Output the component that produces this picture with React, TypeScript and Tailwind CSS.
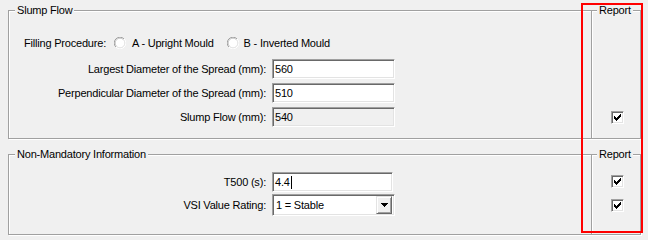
import type { ReactNode } from 'react';

const sunken =
  'border border-t-[#a0a0a0] border-l-[#a0a0a0] border-b-white border-r-white shadow-[inset_1px_1px_0_#696969,inset_-1px_-1px_0_#e3e3e3]';

function Radio() {
  return (
    <svg width="12" height="12" viewBox="0 0 12 12" className="shrink-0">
      <circle cx="6" cy="6" r="5" fill="#fff" />
      <path d="M1.9 10.1 A5.5 5.5 0 0 1 10.1 1.9" fill="none" stroke="#a0a0a0" strokeWidth="1" />
      <path d="M2.6 9.4 A4.5 4.5 0 0 1 9.4 2.6" fill="none" stroke="#c8c8c8" strokeWidth="1" />
      <path d="M10.1 1.9 A5.5 5.5 0 0 1 1.9 10.1" fill="none" stroke="#fff" strokeWidth="1" />
      <path d="M9.4 2.6 A4.5 4.5 0 0 1 2.6 9.4" fill="none" stroke="#e3e3e3" strokeWidth="1" />
    </svg>
  );
}

function CheckBox() {
  return (
    <div className={`h-[13px] w-[13px] bg-white ${sunken}`}>
      <svg width="11" height="11" viewBox="0 0 11 11" shapeRendering="crispEdges">
        <polygon points="2,4 4,6 9,1 9,4 4,9 2,7" fill="#000" />
      </svg>
    </div>
  );
}

function Legend({ children, className }: { children: ReactNode; className: string }) {
  return <span className={`absolute -top-[7px] bg-[#f0f0f0] px-[2px] leading-[13px] ${className}`}>{children}</span>;
}

function Row({ label, children, className = '' }: { label: string; children: ReactNode; className?: string }) {
  return (
    <div className={`flex items-center ${className}`}>
      <span className="w-[242px] text-right">{label}</span>
      <div className="ml-[6px]">{children}</div>
    </div>
  );
}

function TextBox({ value, disabled, caret, width = 'w-[123px]' }: { value: string; disabled?: boolean; caret?: boolean; width?: string }) {
  return (
    <div className={`flex h-[20px] ${width} items-center px-[2px] ${disabled ? 'bg-[#f0f0f0]' : 'bg-white'} ${sunken}`}>
      <span>{value}</span>
      {caret && <span className="ml-[1px] inline-block h-[13px] w-px bg-black" />}
    </div>
  );
}

export default function App() {
  return (
    <div className="relative h-[240px] w-[648px] bg-[#f0f0f0] pl-[8px] pt-[10px] font-['Liberation_Sans',Arial,sans-serif] text-[11px] leading-[13px] tracking-[-0.2px] text-black">
      {/* Slump Flow */}
      <div className="relative flex h-[129px] w-[633px] border border-[#a0a0a0] shadow-[inset_1px_1px_0_#fff,1px_1px_0_#fff]">
        <Legend className="left-[6px]">Slump Flow</Legend>
        <div className="flex-1 pl-[15px] pt-[22px]">
          <div className="flex h-[20px] items-center">
            <span>Filling Procedure:</span>
            <span className="ml-[8px]"><Radio /></span>
            <span className="ml-[6px]">A - Upright Mould</span>
            <span className="ml-[13px]"><Radio /></span>
            <span className="ml-[5px]">B - Inverted Mould</span>
          </div>
          <Row label="Largest Diameter of the Spread (mm):" className="mt-[6px]">
            <TextBox value="560" />
          </Row>
          <Row label="Perpendicular Diameter of the Spread (mm):" className="mt-[4px]">
            <TextBox value="510" />
          </Row>
          <Row label="Slump Flow (mm):" className="mt-[4px]">
            <TextBox value="540" disabled />
          </Row>
        </div>
        <div className="relative w-[49px] border-l border-[#a0a0a0] pl-[19px] pt-[100px] shadow-[inset_1px_0_0_#fff]">
          <Legend className="left-[5px]">Report</Legend>
          <CheckBox />
        </div>
      </div>

      {/* Non-Mandatory Information */}
      <div className="relative mt-[15px] flex h-[81px] w-[633px] border border-[#a0a0a0] shadow-[inset_1px_1px_0_#fff,1px_1px_0_#fff]">
        <Legend className="left-[6px]">Non-Mandatory Information</Legend>
        <div className="flex-1 pl-[15px] pt-[17px]">
          <Row label="T500 (s):">
            <TextBox value="4.4" caret width="w-[121px]" />
          </Row>
          <Row label="VSI Value Rating:" className="mt-[2px]">
            <div className={`flex h-[22px] w-[123px] items-center justify-between bg-white pl-[3px] pr-[2px] ${sunken}`}>
              <span>1 = Stable</span>
              <div className="flex h-[18px] w-[16px] items-center justify-center border border-t-[#e3e3e3] border-l-[#e3e3e3] border-b-[#696969] border-r-[#696969] bg-[#f0f0f0] shadow-[inset_1px_1px_0_#fff,inset_-1px_-1px_0_#a0a0a0]">
                <svg width="7" height="4" viewBox="0 0 7 4" shapeRendering="crispEdges">
                  <polygon points="0,0 7,0 3.5,4" fill="#000" />
                </svg>
              </div>
            </div>
          </Row>
        </div>
        <div className="relative flex w-[49px] flex-col border-l border-[#a0a0a0] pl-[19px] pt-[20px] shadow-[inset_1px_0_0_#fff]">
          <Legend className="left-[5px]">Report</Legend>
          <CheckBox />
          <div className="mt-[11px]">
            <CheckBox />
          </div>
        </div>
      </div>

      {/* annotation */}
      <div className="absolute left-[581px] top-[3px] h-[230px] w-[62px] border-2 border-[#ff0000]" />
    </div>
  );
}
